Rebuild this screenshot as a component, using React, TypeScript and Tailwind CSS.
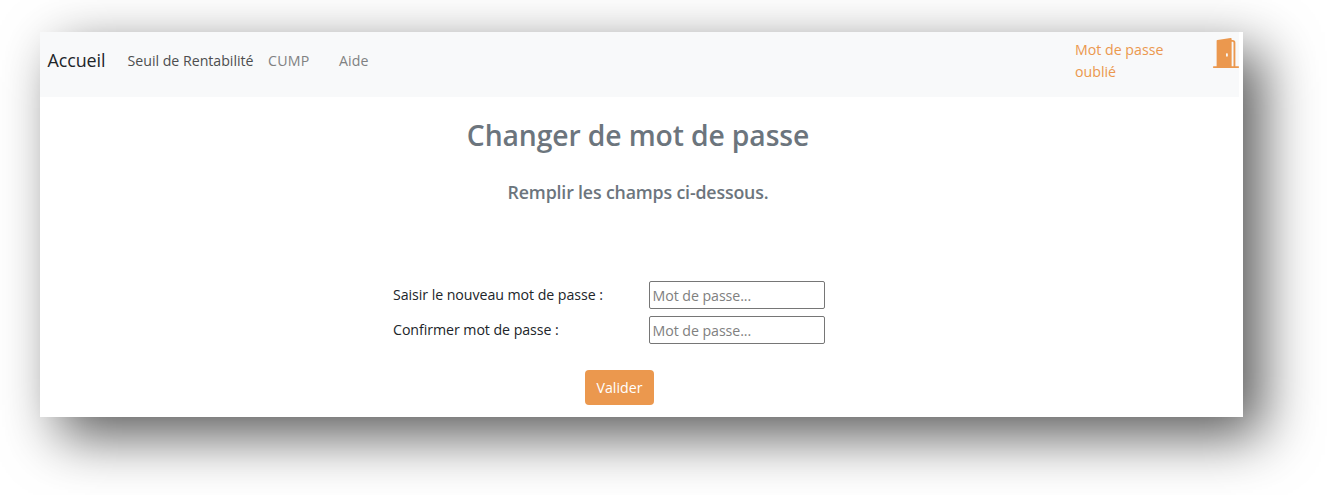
import { BsDoorOpenFill } from "react-icons/bs";

function Navbar() {
  return (
    <nav className="mr-1 flex h-[65px] items-start bg-[#f8f9fa] pl-[7.5px] whitespace-nowrap">
      <a className="mt-[14px] w-20 text-[17.9px] leading-[29px] tracking-[-0.1px] text-[#212529]">Accueil</a>
      <a className="mt-[17px] w-[140.5px] text-[14.2px] leading-[24px] tracking-[-0.02px] text-[#4d4e4f]">Seuil de Rentabilité</a>
      <a className="mt-[17px] w-[71px] text-[14.2px] leading-[24px] tracking-[0.2px] text-[#808182]">CUMP</a>
      <a className="mt-[17px] text-[14.2px] leading-[24px] tracking-[0.1px] text-[#808182]">Aide</a>
      <div className="ml-auto flex">
        <a className="mt-[7px] w-[136px] text-[14.2px] leading-[22px] text-[#eb984e]">
          Mot de passe
          <br />
          oublié
        </a>
        <BsDoorOpenFill className="mt-[6px] -mr-[2px] h-[30px] w-[30px] text-[#eb984e]" />
      </div>
    </nav>
  );
}

function PasswordField({ label }: { label: string }) {
  return (
    <label className="flex h-7 items-center">
      <span className="w-[255.5px] text-[14.2px] tracking-[-0.06px] whitespace-nowrap text-[#212529]">{label}</span>
      <input
        type="password"
        placeholder="Mot de passe..."
        className="h-7 w-44 rounded-[2px] border border-[#767676] bg-white px-[3px] text-[14.2px] tracking-[-0.06px] placeholder:text-[#808080]"
      />
    </label>
  );
}

export default function App() {
  return (
    <div className="h-[495px] w-[1327px] overflow-hidden bg-white pt-8 pl-10 font-['Open_Sans','Noto_Sans',sans-serif]">
      <main className="h-[385px] w-[1203px] bg-white shadow-[19px_19px_52px_rgba(0,0,0,0.65)]">
        <Navbar />
        <div className="mr-[7px] flex flex-col items-center text-[#6c757d]">
          <h1 className="mt-5 text-[28.3px] leading-9 font-semibold tracking-[-0.12px]">Changer de mot de passe</h1>
          <h2 className="mt-[27px] text-[17.8px] leading-6 font-semibold tracking-[-0.17px]">Remplir les champs ci-dessous.</h2>
        </div>
        <form className="mt-[77px] ml-[353px] flex w-[432px] flex-col gap-[7px]">
          <PasswordField label="Saisir le nouveau mot de passe :" />
          <PasswordField label="Confirmer mot de passe :" />
          <button
            type="button"
            className="mt-[19px] ml-[192px] h-[35px] w-[69px] rounded-[4px] bg-[#eb984e] pt-px text-[14.2px] text-white"
          >
            Valider
          </button>
        </form>
      </main>
    </div>
  );
}
